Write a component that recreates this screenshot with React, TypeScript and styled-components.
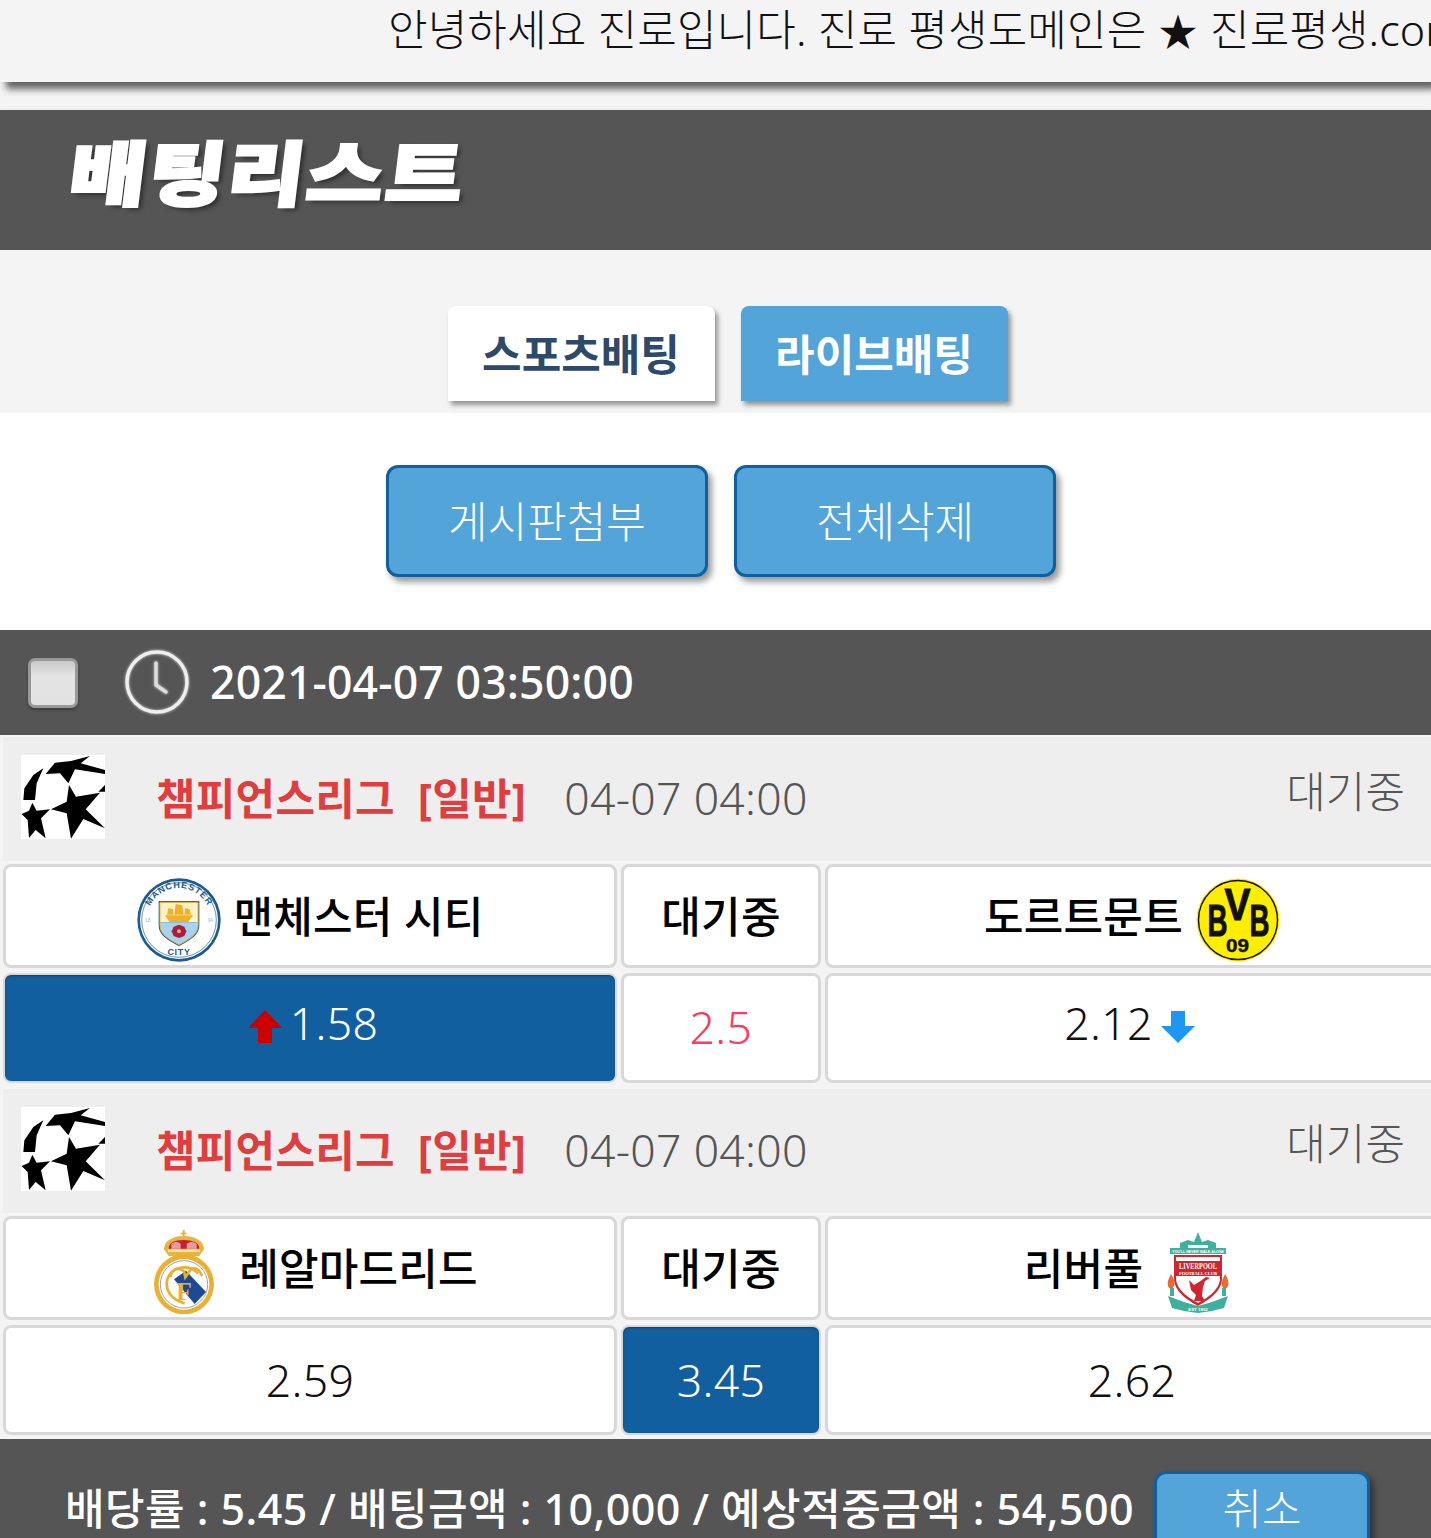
import styled, { createGlobalStyle } from 'styled-components';

const FONT = `"Noto Sans", "Noto Sans CJK KR", sans-serif`;

const GlobalStyle = createGlobalStyle`
  html, body {
    margin: 0;
    padding: 0;
    background: #fff;
    overflow: hidden;
  }
  * {
    box-sizing: border-box;
  }
`;

const Page = styled.div`
  width: 1431px;
  height: 1538px;
  overflow: hidden;
  background: #fff;
  font-family: ${FONT};
`;

const NoticeWrap = styled.div`
  background: #f4f4f4;
  height: 110px;
`;

const Notice = styled.div`
  height: 82px;
  padding: 2px 0 0 388px;
  font-size: 43px;
  line-height: 56px;
  font-weight: 300;
  letter-spacing: 0.1px;
  color: #111;
  white-space: nowrap;
  overflow: hidden;
  background: #f4f4f4;
  box-shadow: 6px 7px 7px rgba(0, 0, 0, 0.6);
`;

const NoticeStar = styled.span`
  font-size: 39px;
  margin: 0 1px;
`;

const TitleBand = styled.div`
  height: 140px;
  padding: 22px 0 0 70px;
  background: #555;
  box-shadow: 0 4px 6px rgba(0, 0, 0, 0.4);
`;

const Title = styled.h1`
  display: inline-block;
  margin: 0;
  font-size: 76px;
  line-height: 82px;
  font-weight: 900;
  color: #fff;
  letter-spacing: 2px;
  transform: skewX(-7deg) scale(1.1, 0.92);
  transform-origin: left center;
  -webkit-text-stroke: 3px #fff;
  text-shadow: 4px 4px 5px rgba(0, 0, 0, 0.5);
`;

const TabStrip = styled.div`
  display: flex;
  justify-content: center;
  gap: 26px;
  height: 163px;
  padding: 56px 0 0 24px;
  background: #f4f4f4;
`;

const Tab = styled.div<{ $active?: boolean }>`
  display: flex;
  align-items: center;
  justify-content: center;
  width: 267px;
  height: 95px;
  padding-bottom: 3px;
  font-size: 43px;
  font-weight: 700;
  border-radius: 8px 8px 0 0;
  color: ${p => (p.$active ? '#fff' : '#2e4a6b')};
  background: ${p => (p.$active ? '#53a4d9' : '#fff')};
  box-shadow: 3px 4px 5px rgba(0, 0, 0, 0.4);
`;

const Actions = styled.div`
  display: flex;
  justify-content: center;
  gap: 26px;
  height: 217px;
  padding: 52px 0 0 11px;
`;

const ActionButton = styled.div`
  display: flex;
  align-items: center;
  justify-content: center;
  width: 322px;
  height: 112px;
  padding-bottom: 4px;
  font-size: 43px;
  font-weight: 300;
  color: #fff;
  background: #53a4d9;
  border: 3px solid #125f9f;
  border-radius: 12px;
  box-shadow: 4px 5px 6px rgba(0, 0, 0, 0.4);
`;

const DateBar = styled.div`
  display: flex;
  align-items: center;
  height: 105px;
  padding-left: 28px;
  background: #555;
`;

const CheckBox = styled.div`
  width: 50px;
  height: 50px;
  border: 3px solid #999;
  border-radius: 7px;
  background: linear-gradient(#c9c9c9, #e4e4e4 35%, #e2e2e2);
  box-shadow: 0 2px 3px rgba(0, 0, 0, 0.3);
`;

const ClockIcon = styled.svg`
  width: 66px;
  height: 66px;
  margin-left: 46px;
  filter: drop-shadow(0 0 1.5px rgba(255, 255, 255, 0.7));
`;

const DateText = styled.div`
  margin: -2px 0 0 20px;
  font-size: 44.6px;
  font-weight: 500;
  letter-spacing: 0.12px;
  color: #fff;
`;

const Matches = styled.div`
  display: flex;
  flex-direction: column;
  padding-left: 3px;
  background: #f4f4f4;
`;

const Match = styled.div`
  padding: 2px 0 4px;
`;

const MatchHead = styled.div`
  display: flex;
  align-items: flex-start;
  height: 124px;
  padding: 18px 26px 0 18px;
  margin-bottom: 3px;
  background: #eee;
`;

const League = styled.div`
  margin-left: 51px;
  font-size: 43px;
  line-height: 88px;
  font-weight: 700;
  letter-spacing: 0.25px;
  color: #e03d3f;
  white-space: pre;
`;

const KickOff = styled.div`
  margin-left: 38px;
  font-size: 44.5px;
  line-height: 86px;
  font-weight: 300;
  letter-spacing: 0.3px;
  color: #555;
`;

const Status = styled.div`
  margin-left: auto;
  font-size: 43px;
  line-height: 74px;
  font-weight: 300;
  color: #555;
`;

const Row = styled.div<{ $odds?: boolean }>`
  display: grid;
  grid-template-columns: 614px 200px 614px;
  gap: 4px;
  height: ${p => (p.$odds ? 110 : 104)}px;
  margin-top: ${p => (p.$odds ? 5 : 0)}px;
`;

const Cell = styled.div<{ $picked?: boolean }>`
  display: flex;
  align-items: center;
  justify-content: center;
  gap: 13px;
  background: ${p => (p.$picked ? '#125f9f' : '#fff')};
  border: ${p => (p.$picked ? 2 : 3)}px solid #d8d8d8;
  border-radius: 8px;
  box-shadow: ${p => (p.$picked ? 'inset 0 1px 2px rgba(0, 0, 0, 0.35)' : 'none')};
`;

const TeamName = styled.div`
  font-size: 43px;
  font-weight: 500;
  letter-spacing: 0.2px;
  color: #000;
  margin-top: -4px;
`;

const Crest = styled.svg`
  width: 84px;
  height: 84px;
  flex: none;
`;

const TeamCrest = styled(Crest)`
  margin-top: 8px;
`;

const Odds = styled.div<{ $picked?: boolean; $arrow?: 'left' | 'right' }>`
  display: flex;
  align-items: center;
  gap: 8px;
  font-size: 44.5px;
  font-weight: 300;
  letter-spacing: 0.4px;
  margin-top: ${p => (p.$arrow ? -12 : -2)}px;
  padding-left: ${p => (p.$arrow === 'left' ? 6 : 0)}px;
  padding-right: ${p => (p.$arrow === 'right' ? 5 : 0)}px;
  color: ${p => (p.$picked ? '#fff' : '#111')};
`;

const Handicap = styled.div`
  font-size: 44.5px;
  font-weight: 300;
  letter-spacing: 0.4px;
  margin-top: -4px;
  color: #fa3c5f;
`;

const ArrowIcon = styled.svg`
  width: 34px;
  height: 34px;
  flex: none;
  margin-top: 9px;
`;

const Footer = styled.div`
  display: flex;
  align-items: flex-start;
  height: 140px;
  padding: 32px 0 0 65px;
  background: #555;
`;

const Summary = styled.div`
  font-size: 43px;
  line-height: 76px;
  font-weight: 500;
  letter-spacing: 0.45px;
  color: #fff;
  white-space: nowrap;
`;

const CancelButton = styled.div`
  display: flex;
  justify-content: center;
  width: 216px;
  height: 100px;
  margin-left: 20px;
  font-size: 43px;
  line-height: 70px;
  font-weight: 300;
  color: #fff;
  background: #53a4d9;
  border: 3px solid #125f9f;
  border-radius: 12px;
  box-shadow: 4px 4px 6px rgba(0, 0, 0, 0.4);
`;

const Ball = () => (
  <Crest viewBox="18 15 252 252">
    <rect x="18" y="15" width="252" height="252" fill="#fff" />
    <g fill="#000">
      <polygon points="108,178 155,155 162,105 183,140 255,128 212,178 270,235 205,207 168,266 155,190" />
      <polygon points="120,38 168,33 225,18 197,40 270,60 270,72 180,58 160,100 135,70 92,72" />
      <polygon points="85,55 65,100 60,150 25,150 28,115 55,75" />
      <polygon points="52,158 65,182 105,178 78,205 92,265 62,240 42,264 38,210 20,192 42,182" />
      <polygon points="270,105 270,125 250,125" />
    </g>
  </Crest>
);

const ManCity = () => (
  <TeamCrest viewBox="18 18 252 252">
    <defs>
      <path id="mc-top" d="M48 144 A96 96 0 0 1 240 144" />
      <clipPath id="mc-shield">
        <path d="M87 91 L201 91 L201 160 C201 190 168 205 144 218 C120 205 87 190 87 160 Z" />
      </clipPath>
    </defs>
    <circle cx="144" cy="144" r="125" fill="#1b5a92" />
    <circle cx="144" cy="144" r="117" fill="#fff" />
    <circle cx="144" cy="144" r="112" fill="none" stroke="#1b5a92" strokeWidth="2" />
    <text fontFamily="Liberation Sans" fontWeight="700" fontSize="27" fill="#1b5a92" letterSpacing="2.5">
      <textPath href="#mc-top" startOffset="50%" textAnchor="middle">MANCHESTER</textPath>
    </text>
    <text x="144" y="250" fontFamily="Liberation Sans" fontWeight="700" fontSize="27" fill="#1b5a92" letterSpacing="2" textAnchor="middle">
      CITY
    </text>
    <text x="50" y="150" fontFamily="Liberation Sans" fontSize="14" fill="#8fc0e6" textAnchor="middle">18</text>
    <text x="238" y="150" fontFamily="Liberation Sans" fontSize="14" fill="#8fc0e6" textAnchor="middle">94</text>
    <path d="M83 87 L205 87 L205 160 C205 194 168 208 144 223 C120 208 83 194 83 160 Z" fill="#1b5a92" />
    <g clipPath="url(#mc-shield)">
      <rect x="87" y="91" width="114" height="60" fill="#fdf3c6" />
      <rect x="87" y="151" width="114" height="70" fill="#a9d2ee" />
    </g>
    <path d="M87 91 L201 91 L201 160 C201 190 168 205 144 218 C120 205 87 190 87 160 Z" fill="none" stroke="#f0b938" strokeWidth="3" />
    <g fill="#eeb12a">
      <path d="M102 130 L186 130 L172 150 L116 150 Z" />
      <path d="M112 108 L126 112 L128 128 L108 128 Z" />
      <path d="M134 96 L154 100 L158 128 L130 128 Z" />
      <path d="M163 108 L176 112 L180 128 L160 128 Z" />
    </g>
    <path d="M144 158 L160 164 L166 178 L160 192 L144 198 L128 192 L122 178 L128 164 Z" fill="#a81f36" />
    <circle cx="144" cy="178" r="6" fill="#e0a0a0" />
  </TeamCrest>
);

const Dortmund = () => (
  <TeamCrest viewBox="0 0 84 84">
    <circle cx="42" cy="42" r="41.5" fill="#ffee00" />
    <circle cx="42" cy="42" r="39.5" fill="none" stroke="#111" strokeWidth="1.4" />
    <g fontFamily="Liberation Sans" fontWeight="700" fill="#111" stroke="#111" textAnchor="middle">
      <text x="21.5" y="57.5" fontSize="44" strokeWidth="1" textLength="20" lengthAdjust="spacingAndGlyphs">B</text>
      <text x="41.5" y="42" fontSize="44" strokeWidth="1" textLength="26" lengthAdjust="spacingAndGlyphs">V</text>
      <text x="63.5" y="57.5" fontSize="44" strokeWidth="1" textLength="20" lengthAdjust="spacingAndGlyphs">B</text>
      <text x="41.5" y="74" fontSize="18" strokeWidth="0.4" textLength="23" lengthAdjust="spacingAndGlyphs">09</text>
    </g>
  </TeamCrest>
);

const RealMadrid = () => (
  <TeamCrest viewBox="42 30 252 252">
    <g fill="#e6b53c">
      <rect x="164" y="30" width="6" height="22" />
      <rect x="158" y="38" width="18" height="5" />
      <path d="M108 88 C108 62 135 48 167 48 C200 48 228 62 228 88 L214 108 L122 108 Z" />
    </g>
    <path d="M122 86 C122 68 140 60 167 60 C194 60 214 68 214 86 Z" fill="#c8202f" />
    <path d="M130 72 C140 64 150 64 158 72 L158 86 L130 86 Z M176 72 C186 64 196 64 206 72 L206 86 L176 86 Z" fill="#fff" opacity="0.55" />
    <rect x="120" y="88" width="96" height="8" fill="#f7e3a4" />
    <circle cx="168" cy="193" r="90" fill="#eab030" />
    <circle cx="168" cy="193" r="76" fill="#fff" />
    <circle cx="168" cy="193" r="71" fill="none" stroke="#9da3ad" strokeWidth="3" />
    <polygon points="138,178 174,152 234,216 200,252" fill="#1d4a94" />
    <g fill="none" stroke="#eab030" strokeWidth="8">
      <path d="M210 160 C180 130 130 140 118 178 C110 210 130 240 170 250" />
      <path d="M128 172 C128 150 150 138 168 154 L172 172 L190 146 C205 142 216 152 222 168" />
    </g>
    <text x="168" y="240" fontFamily="Liberation Serif" fontSize="76" fontWeight="700" fill="#eab030" textAnchor="middle">F</text>
  </TeamCrest>
);

const Liverpool = () => (
  <TeamCrest viewBox="0 0 84 84">
    <path d="M24 20 L24 13 L32 10 L38 12 L42 2 L46 12 L52 10 L60 13 L60 20 Z" fill="#3db19d" />
    <path d="M32 15 L52 15 L52 20 L32 20 Z" fill="#fff" />
    <rect x="14" y="18" width="56" height="6" fill="#3db19d" />
    <text x="42" y="23" fontFamily="Liberation Sans" fontSize="4.2" fontWeight="700" fill="#fff" textAnchor="middle" textLength="52" lengthAdjust="spacingAndGlyphs">
      YOU'LL NEVER WALK ALONE
    </text>
    <path d="M18 25 L66 25 L66 48 C66 62 52 70 42 76 C32 70 18 62 18 48 Z" fill="#d2232f" />
    <path d="M20 27 L64 27 L64 48 C64 60 51 68 42 73 C33 68 20 60 20 48 Z" fill="#fff" />
    <rect x="20" y="31" width="44" height="15" fill="#d2232f" />
    <text x="42" y="39" fontFamily="Liberation Serif" fontSize="8.6" fontWeight="700" fill="#fff" textAnchor="middle" textLength="38" lengthAdjust="spacingAndGlyphs">
      LIVERPOOL
    </text>
    <text x="42" y="45" fontFamily="Liberation Serif" fontSize="5" fontWeight="700" fill="#fff" textAnchor="middle" textLength="38" lengthAdjust="spacingAndGlyphs">
      FOOTBALL CLUB
    </text>
    <path d="M50 47 L54 48 L49 51 L47 57 L46 66 L49 71 L38 71 L40 65 L35 60 L33 50 L38 55 L43 52 Z" fill="#d2232f" />
    <path d="M13 58 C10 52 13 49 15 44 C18 49 20 53 17 58 Z M67 58 C64 52 67 49 69 44 C72 49 74 53 71 58 Z" fill="#ec6a2c" />
    <path d="M14 58 L18 58 L18 66 L14 66 Z M66 58 L70 58 L70 66 L66 66 Z" fill="#3db19d" />
    <path d="M12 66 L28 72 L42 76 L56 72 L72 66 L68 78 L56 81 L42 83 L28 81 L16 78 Z" fill="#3db19d" />
    <text x="42" y="81" fontFamily="Liberation Sans" fontSize="4.4" fontWeight="700" fill="#fff" textAnchor="middle">
      EST 1892
    </text>
  </TeamCrest>
);

const ArrowUp = () => (
  <ArrowIcon viewBox="0 0 34 34">
    <polygon fill="#cc0000" points="17,0 34,18 24,18 24,33 10,33 10,18 0,18" />
  </ArrowIcon>
);

const ArrowDown = () => (
  <ArrowIcon viewBox="0 0 34 34">
    <polygon fill="#1c97f3" points="10,1 24,1 24,16 34,16 17,33 0,16 10,16" />
  </ArrowIcon>
);

const MatchBlock = ({
  home,
  away,
  odds,
}: {
  home: React.ReactNode;
  away: React.ReactNode;
  odds: React.ReactNode;
}) => (
  <Match>
    <MatchHead>
      <Ball />
      <League>챔피언스리그  [일반]</League>
      <KickOff>04-07 04:00</KickOff>
      <Status>대기중</Status>
    </MatchHead>
    <Row>
      <Cell>{home}</Cell>
      <Cell>
        <TeamName>대기중</TeamName>
      </Cell>
      <Cell>{away}</Cell>
    </Row>
    <Row $odds>{odds}</Row>
  </Match>
);

export default function App() {
  return (
    <Page>
      <GlobalStyle />
      <NoticeWrap>
        <Notice>
          안녕하세요 진로입니다. 진로 평생도메인은 <NoticeStar>★</NoticeStar> 진로평생.com
        </Notice>
      </NoticeWrap>
      <TitleBand>
        <Title>배팅리스트</Title>
      </TitleBand>
      <TabStrip>
        <Tab>스포츠배팅</Tab>
        <Tab $active>라이브배팅</Tab>
      </TabStrip>
      <Actions>
        <ActionButton>게시판첨부</ActionButton>
        <ActionButton>전체삭제</ActionButton>
      </Actions>
      <DateBar>
        <CheckBox />
        <ClockIcon viewBox="0 0 66 66">
          <circle cx="33" cy="32" r="30" fill="none" stroke="#eee" strokeWidth="3.5" />
          <path d="M32 13 L32 35 L42 42" fill="none" stroke="#ddd" strokeWidth="3.5" strokeLinecap="round" strokeLinejoin="round" />
        </ClockIcon>
        <DateText>2021-04-07 03:50:00</DateText>
      </DateBar>
      <Matches>
        <MatchBlock
          home={
            <>
              <ManCity />
              <TeamName>맨체스터 시티</TeamName>
            </>
          }
          away={
            <>
              <TeamName>도르트문트</TeamName>
              <Dortmund />
            </>
          }
          odds={
            <>
              <Cell $picked>
                <Odds $picked $arrow="left">
                  <ArrowUp />
                  1.58
                </Odds>
              </Cell>
              <Cell>
                <Handicap>2.5</Handicap>
              </Cell>
              <Cell>
                <Odds $arrow="right">
                  2.12
                  <ArrowDown />
                </Odds>
              </Cell>
            </>
          }
        />
        <MatchBlock
          home={
            <>
              <RealMadrid />
              <TeamName>레알마드리드</TeamName>
            </>
          }
          away={
            <>
              <TeamName>리버풀</TeamName>
              <Liverpool />
            </>
          }
          odds={
            <>
              <Cell>
                <Odds>2.59</Odds>
              </Cell>
              <Cell $picked>
                <Odds $picked>3.45</Odds>
              </Cell>
              <Cell>
                <Odds>2.62</Odds>
              </Cell>
            </>
          }
        />
      </Matches>
      <Footer>
        <Summary>배당률 : 5.45 / 배팅금액 : 10,000 / 예상적중금액 : 54,500</Summary>
        <CancelButton>취소</CancelButton>
      </Footer>
    </Page>
  );
}
